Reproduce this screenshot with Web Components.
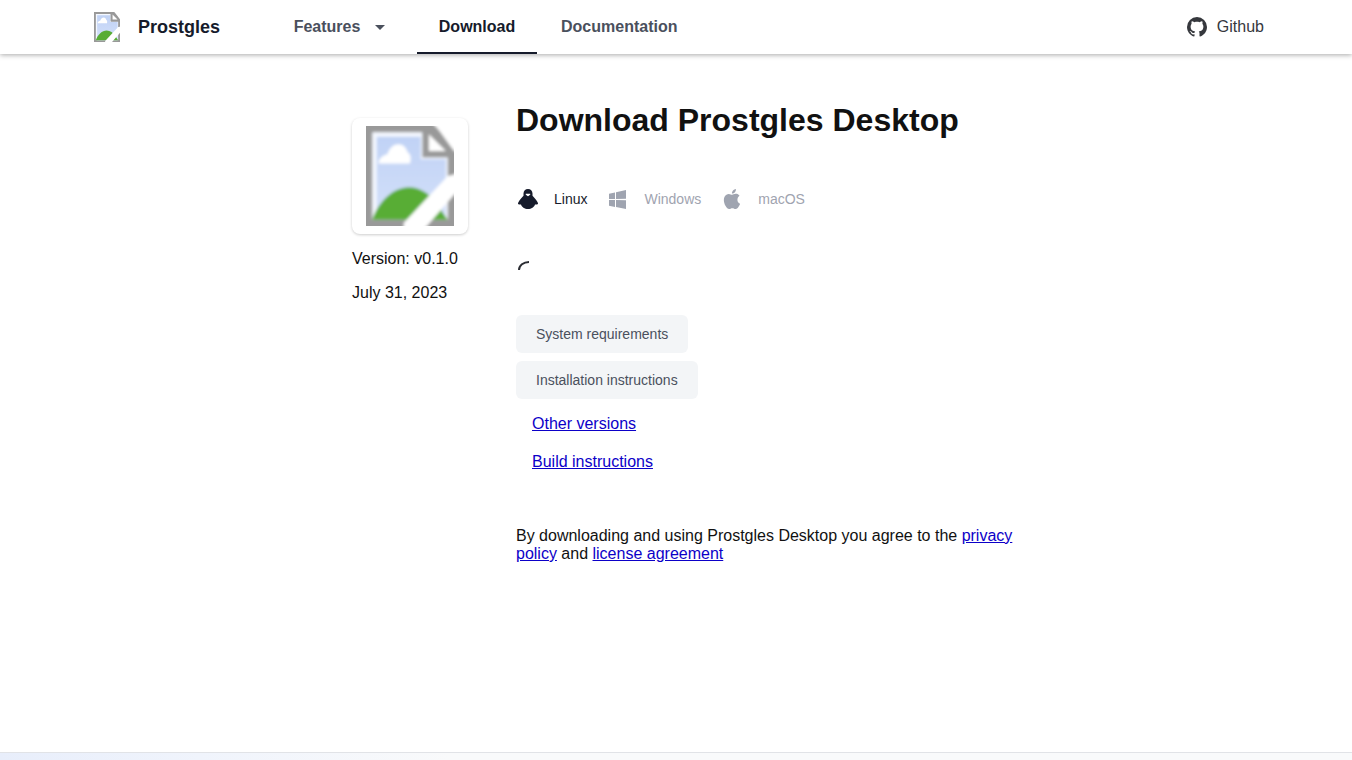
<!DOCTYPE html>
<html lang="en">
<head>
<meta charset="utf-8">
<meta name="viewport" content="width=device-width, initial-scale=1">
<title>Prostgles - Download</title>
<style>
body {
    margin: 0;
    min-height: 100vh;
    display: flex;
    flex-direction: column;
    background: #fff;
    color: #111;
    font: 16px/18px "Liberation Sans", Arial, sans-serif;
}
</style>
</head>
<body>

<site-header>
    <nav-tab menu>Features</nav-tab>
    <nav-tab href="#download" active>Download</nav-tab>
    <nav-tab href="#docs">Documentation</nav-tab>
</site-header>

<download-page version="v0.1.0" date="July 31, 2023">
    <os-tabs slot="systems"></os-tabs>
    <soft-button>System requirements</soft-button>
    <soft-button>Installation instructions</soft-button>
</download-page>

<site-footer></site-footer>

<script>
const icons = {
    caret: "M7,10L12,15L17,10H7Z",
    github: "M12,2A10,10 0 0,0 2,12C2,16.42 4.87,20.17 8.84,21.5C9.34,21.58 9.5,21.27 9.5,21V19.31C6.73,19.91 6.14,17.97 6.14,17.97C5.68,16.81 5.03,16.5 5.03,16.5C4.12,15.88 5.1,15.9 5.1,15.9C6.1,15.97 6.63,16.93 6.63,16.93C7.5,18.45 8.97,18 9.54,17.76C9.63,17.11 9.89,16.67 10.17,16.42C7.95,16.17 5.62,15.31 5.62,11.5C5.62,10.39 6,9.5 6.65,8.79C6.55,8.54 6.2,7.5 6.75,6.15C6.75,6.15 7.59,5.88 9.5,7.17C10.29,6.95 11.15,6.84 12,6.84C12.85,6.84 13.71,6.95 14.5,7.17C16.41,5.88 17.25,6.15 17.25,6.15C17.8,7.5 17.45,8.54 17.35,8.79C18,9.5 18.38,10.39 18.38,11.5C18.38,15.32 16.04,16.16 13.81,16.41C14.17,16.72 14.5,17.33 14.5,18.26V21C14.5,21.27 14.66,21.59 15.17,21.5C19.14,20.16 22,16.42 22,12A10,10 0 0,0 12,2Z",
    linux: "M12,2C9.3,2 7.5,3.9 7.5,6.4V8.8C5.2,11 3.8,13.2 2.4,15.2C1.6,16.5 2,17.5 3.2,17.5H5C5.7,20.2 8.6,22 12,22S18.3,20.2 19,17.5H20.8C22,17.5 22.4,16.5 21.6,15.2C20.2,13.2 18.8,11 16.5,8.8V6.4C16.5,3.9 14.7,2 12,2M10.3,6.8H13.7C14.3,6.8 14.5,7.4 14.1,7.8L12.5,9Q12,9.3 11.5,9L9.9,7.8C9.5,7.4 9.7,6.8 10.3,6.8Z",
    windows: "M3,12V6.75L9,5.43V11.91L3,12M20,3V11.75L10,11.9V5.21L20,3M3,13L9,13.09V19.9L3,18.75V13M20,13.25V22L10,20.09V13.1L20,13.25Z",
    apple: "M18.71,19.5C17.88,20.74 17,21.95 15.66,21.97C14.32,22 13.89,21.18 12.37,21.18C10.84,21.18 10.37,21.95 9.1,22C7.79,22.05 6.8,20.68 5.96,19.47C4.25,17 2.94,12.45 4.7,9.39C5.57,7.87 7.13,6.91 8.82,6.88C10.1,6.86 11.32,7.75 12.11,7.75C12.89,7.75 14.37,6.68 15.92,6.84C16.57,6.87 18.39,7.1 19.56,8.82C19.47,8.88 17.39,10.1 17.41,12.63C17.44,15.65 20.06,16.66 20.09,16.67C20.06,16.74 19.67,18.11 18.71,19.5M13,3.5C13.73,2.67 14.94,2.04 15.94,2C16.07,3.17 15.6,4.35 14.9,5.19C14.21,6.04 13.07,6.7 11.95,6.61C11.8,5.46 12.36,4.26 13,3.5Z"
};

function mount(element, html)
{
    const template = document.createElement("template");
    template.innerHTML = html;
    element.attachShadow({ mode: "open" }).appendChild(template.content.cloneNode(true));
}

// ---------------- icons ----------------

class AppIcon extends HTMLElement
{
    constructor()
    {
        super();
        this.attachShadow({ mode: "open" });
    }

    connectedCallback()
    {
        this.shadowRoot.innerHTML = `
        <style>
        :host { display: block; width: 24px; height: 24px; flex: none; }
        svg { display: block; width: 100%; height: 100%; fill: currentColor; }
        </style>
        <svg viewBox="0 0 24 24" aria-hidden="true"><path fill-rule="evenodd" d="${icons[this.getAttribute("name")]}"/></svg>`;
    }
}

customElements.define("app-icon", AppIcon);

// page with a folded corner, a cloud and a hill, torn at the bottom right
class MissingPicture extends HTMLElement
{
    constructor()
    {
        super();
        mount(this, `
        <style>
        :host { display: block; flex: none; }
        svg { display: block; width: 100%; height: 100%; overflow: hidden; }
        </style>
        <svg viewBox="0 0 14 16" preserveAspectRatio="none" aria-hidden="true">
            <defs>
                <linearGradient id="sky" x1="0" y1="0" x2="0" y2="1">
                    <stop offset="0" stop-color="#c0d2f5"/>
                    <stop offset="1" stop-color="#d3e0fa"/>
                </linearGradient>
                <filter id="soft" x="-20%" y="-20%" width="140%" height="140%"><feGaussianBlur stdDeviation="0.25"/></filter>
            </defs>
            <g filter="url(#soft)">
                <path fill="#999" d="M-1-1H10L15 4V17H-1Z"/>
                <path fill="#f4f8ff" d="M1 1H9V5H13V15H1Z"/>
                <path fill="url(#sky)" d="M1.7 1.7H8.7V5.3H12.7V15H1.7Z"/>
                <path fill="#fff" d="M2 6C2 5.2 2.6 4.7 3.4 4.5C3.8 3.4 4.4 2.9 5.2 2.9C6 2.9 6.5 3.6 6.6 4.2C7.2 4.5 7.2 5.3 7 6Z"/>
                <path fill="#58ad36" d="M1 15C2 12 4.4 9.8 6.8 9.8C8.7 9.8 10.4 11 11.4 12.7L13 15Z"/>
                <path fill="#999" d="M9-1H10V4H14V5H9Z"/>
                <path fill="#fff" d="M10 1.3L12.7 4H10Z"/>
                <path fill="#fff" d="M10.4-1H16V4.4L14 4Z"/>
                <path fill="#999" d="M10 0L14 4H13L10 1Z"/>
                <path fill="#fff" d="M16 6L14 7.8L13 8L6 15.5V17.5H8.4L14 11L16 10Z"/>
            </g>
        </svg>`);
    }
}

customElements.define("missing-picture", MissingPicture);

// ---------------- header ----------------

class NavTab extends HTMLElement
{
    constructor()
    {
        super();
        const menu = this.hasAttribute("menu");
        const inner = menu
            ? `<button type="button" aria-haspopup="true"><slot></slot><app-icon name="caret"></app-icon></button>`
            : `<a href="${this.getAttribute("href")}"><slot></slot></a>`;

        mount(this, `
        <style>
        :host { display: flex; color: #4a505d; }
        :host([active]) { color: #161b2b; }
        a, button
        {
            box-sizing: border-box;
            display: flex;
            align-items: center;
            justify-content: center;
            gap: 8px;
            min-width: 120px;
            padding: 0 20px;
            border: 0;
            border-top: 2px solid transparent;
            border-bottom: 2px solid transparent;
            background: none;
            color: inherit;
            font: bold 16px/18px "Liberation Sans", Arial, sans-serif;
            text-decoration: none;
            cursor: pointer;
        }
        button { min-width: 140px; }
        :host([active]) a { border-bottom-color: #161b2b; }
        </style>
        ${inner}`);
    }
}

customElements.define("nav-tab", NavTab);

class SiteHeader extends HTMLElement
{
    constructor()
    {
        super();
        mount(this, `
        <style>
        :host { display: block; position: relative; background: #fff; box-shadow: 0 1px 5px rgba(0, 0, 0, 0.34); }
        header { display: flex; height: 54px; padding: 0 88px; }
        .brand, .github { display: flex; align-items: center; text-decoration: none; }
        .brand { gap: 18px; margin: 0 53px 0 6px; color: #161b2b; font-size: 18px; font-weight: bold; }
        .brand missing-picture { width: 26px; height: 30px; }
        nav { display: flex; gap: 4px; }
        .github { gap: 8px; margin-left: auto; color: #36383d; }
        </style>
        <header>
            <a class="brand" href="#home"><missing-picture></missing-picture>Prostgles</a>
            <nav><slot></slot></nav>
            <a class="github" href="#github"><app-icon name="github"></app-icon>Github</a>
        </header>`);
    }
}

customElements.define("site-header", SiteHeader);

// ---------------- download page ----------------

class OsTabs extends HTMLElement
{
    constructor()
    {
        super();
        mount(this, `
        <style>
        :host { display: flex; gap: 19px; }
        button
        {
            display: flex;
            align-items: center;
            gap: 14px;
            padding: 0;
            border: 0;
            background: none;
            color: #9fa4b0;
            font: 14px/18px "Liberation Sans", Arial, sans-serif;
            cursor: pointer;
        }
        button[aria-pressed="true"] { color: #161b2b; }
        </style>
        <button type="button" aria-pressed="true"><app-icon name="linux"></app-icon>Linux</button>
        <button type="button" aria-pressed="false"><app-icon name="windows"></app-icon>Windows</button>
        <button type="button" aria-pressed="false"><app-icon name="apple"></app-icon>macOS</button>`);

        const buttons = this.shadowRoot.querySelectorAll("button");
        buttons.forEach((button) =>
        {
            button.addEventListener("click", () =>
            {
                buttons.forEach((other) => other.setAttribute("aria-pressed", other === button));
            });
        });
    }
}

customElements.define("os-tabs", OsTabs);

class SoftButton extends HTMLElement
{
    constructor()
    {
        super();
        mount(this, `
        <style>
        :host { display: block; }
        button
        {
            display: block;
            padding: 10px 20px;
            border: 0;
            border-radius: 6px;
            background: #f3f5f7;
            color: #4a505d;
            font: 14px/18px "Liberation Sans", Arial, sans-serif;
            cursor: pointer;
        }
        </style>
        <button type="button"><slot></slot></button>`);
    }
}

customElements.define("soft-button", SoftButton);

class DownloadPage extends HTMLElement
{
    constructor()
    {
        super();
        mount(this, `
        <style>
        :host { display: block; flex: 1; }
        main
        {
            box-sizing: border-box;
            display: flex;
            align-items: flex-start;
            gap: 48px;
            max-width: 680px;
            margin: 0 auto;
            padding: 48px 0 48px 16px;
        }
        aside { display: flex; flex-direction: column; flex: none; gap: 16px; padding-top: 16px; }
        .card { padding: 8px 14px; border-radius: 8px; box-shadow: 0 1px 3px rgba(0, 0, 0, 0.2); }
        .card missing-picture { width: 88px; height: 100px; }
        section { flex: 1; min-width: 0; }
        h1 { margin: 0 0 49px; font-size: 32px; line-height: 36px; }
        .spinner { display: block; width: 24px; height: 24px; margin: 48px 0 32px; }
        .more, .links { display: flex; flex-direction: column; align-items: flex-start; gap: 8px; }
        .links { gap: 20px; padding: 16px; }
        a { color: #0c00c8; }
        p { margin: 0; }
        .terms { margin-top: 40px; }
        </style>
        <main>
            <aside>
                <div class="card"><missing-picture></missing-picture></div>
                <p>Version: ${this.getAttribute("version")}</p>
                <p>${this.getAttribute("date")}</p>
            </aside>
            <section>
                <h1>Download Prostgles Desktop</h1>
                <slot name="systems"></slot>
                <svg class="spinner" viewBox="0 0 24 24" role="img" aria-label="Loading">
                    <path d="M3 11A10 8 0 0 1 13 3" fill="none" stroke="#2b2d33" stroke-width="2"/>
                </svg>
                <div class="more"><slot></slot></div>
                <div class="links">
                    <a href="#versions">Other versions</a>
                    <a href="#build">Build instructions</a>
                </div>
                <p class="terms">By downloading and using Prostgles Desktop you agree to the <a href="#privacy">privacy policy</a> and <a href="#license">license agreement</a></p>
            </section>
        </main>`);
    }
}

customElements.define("download-page", DownloadPage);

class SiteFooter extends HTMLElement
{
    constructor()
    {
        super();
        mount(this, `
        <style>
        :host { display: block; }
        footer { height: 7px; border-top: 1px solid #e1e3e7; background: linear-gradient(90deg, #e8eefb, #f0f4fc 200px, #f9fafb 450px); }
        </style>
        <footer></footer>`);
    }
}

customElements.define("site-footer", SiteFooter);
</script>
</body>
</html>
